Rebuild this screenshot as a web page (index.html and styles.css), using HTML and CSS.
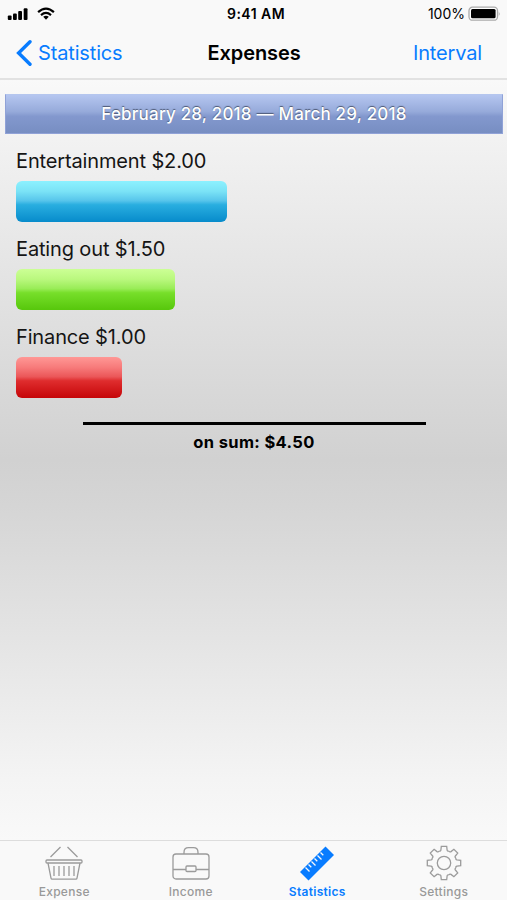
FILE: index.html
```html
<!DOCTYPE html>
<html lang="en">
<head>
<meta charset="utf-8">
<title>Expenses</title>
<link rel="stylesheet" href="styles.css">
</head>
<body>
<header class="header">
  <div class="status">
    <div class="signals">
      <svg width="21" height="14" viewBox="0 0 21 14"><rect x="0.8" y="8.500" width="3.800" height="4.500" rx="1"/><rect x="6" y="6.500" width="3.800" height="6.500" rx="1"/><rect x="11.200" y="4" width="3.800" height="9" rx="1"/><rect x="16.700" y="1.200" width="3.800" height="11.800" rx="1"/></svg>
      <svg class="wifi" width="18" height="14" viewBox="0 0 18 14"><path d="M1.100 5.100Q9-2 16.900 5.100M4 8.100Q9 3.800 14 8.100" fill="none" stroke="#000" stroke-width="2.200"/><path d="M6.200 9.800Q9 7.800 11.800 9.800L9 12.700Z"/></svg>
    </div>
    <span class="time">9:41 AM</span>
    <div class="power">
      <span class="percent">100%</span>
      <svg width="33" height="16" viewBox="0 0 33 16"><rect x="1" y="1.200" width="28.500" height="13" rx="3.500" fill="#fff" stroke="#aaa" stroke-width="1.300"/><rect x="3" y="3.100" width="24.600" height="9.200" rx="1.500"/><path d="M30.800 5.500q1.500 2.200 0 4.400z" fill="#999"/></svg>
    </div>
  </div>
  <nav class="navbar">
    <a class="back"><svg width="16" height="26" viewBox="0 0 16 26"><path d="M14 1.800L2.600 13L14 24.200" fill="none" stroke="#087cff" stroke-width="3.400" stroke-linecap="round"/></svg><span>Statistics</span></a>
    <h1 class="title">Expenses</h1>
    <a class="interval">Interval</a>
  </nav>
</header>
<main class="content">
  <div class="period">February 28, 2018 — March 29, 2018</div>
  <section class="chart">
    <div class="label">Entertainment $2.00</div>
    <div class="bar blue"></div>
    <div class="label">Eating out $1.50</div>
    <div class="bar green"></div>
    <div class="label">Finance $1.00</div>
    <div class="bar red"></div>
  </section>
  <div class="total">on sum: $4.50</div>
</main>
<footer class="tabs">
  <a class="tab"><svg width="38" height="36" viewBox="0 0 38 36"><path d="M15.500 2L5.500 12M22.500 2L32.500 12"/><rect x="1" y="15" width="36" height="3" rx="1"/><path d="M3 18l3 15.200q.2 1 1 1h24q.8 0 1-1L35 18M9 21v10M14 21v10M19 21v10M24 21v10M29 21v10"/></svg><span>Expense</span></a>
  <a class="tab"><svg width="38" height="36" viewBox="0 0 38 36"><rect x="1" y="9" width="36" height="25" rx="3"/><path d="M12 9V7.500Q12 2.700 16.500 2.700h5Q26 2.700 26 7.500V9M1 24.500h13M24 24.500h13"/><rect x="14" y="21" width="10" height="5.500" rx="1"/></svg><span>Income</span></a>
  <a class="tab active"><svg width="38" height="36" viewBox="0 0 38 36"><path class="ruler" d="M27.500 1.500L36 10L10.500 35.500L2 27Z"/><path class="marks" d="M7.500 22.500l4 4M10.500 19.500l2.800 2.800M13.500 16.500l4 4M16.500 13.500l2.800 2.800M19.500 10.500l4 4M22.500 7.500l2.800 2.800"/></svg><span>Statistics</span></a>
  <a class="tab"><svg width="38" height="36" viewBox="-19 -18 38 36"><defs><path id="tooth" d="M-4.970-12Q-3.300-11.500-3.100-13L-2.700-16.700H2.700L3.100-13Q3.300-11.500 4.970-12"/></defs><use href="#tooth"/><use href="#tooth" transform="rotate(45)"/><use href="#tooth" transform="rotate(90)"/><use href="#tooth" transform="rotate(135)"/><use href="#tooth" transform="rotate(180)"/><use href="#tooth" transform="rotate(225)"/><use href="#tooth" transform="rotate(270)"/><use href="#tooth" transform="rotate(315)"/><circle r="6.700"/></svg><span>Settings</span></a>
</footer>
</body>
</html>
```
FILE: styles.css
```css
* { box-sizing: border-box; }
body { margin: 0; width: 507px; height: 900px; display: flex; flex-direction: column; overflow: hidden; background: #f9f9f9; color: #000; font-family: Inter, "Liberation Sans", sans-serif; white-space: nowrap; }
svg { display: block; flex: none; }
.header { height: 80px; border-bottom: 2px solid #e2e2e2; background: #f9f9f9; }
.status { height: 27px; display: grid; grid-template-columns: 1fr 62px 1fr; align-items: center; padding: 0 6px 0 7px; }
.signals, .power { display: flex; align-items: center; }
.wifi { margin-left: 9px; }
.power { justify-content: flex-end; gap: 3px; }
.time { font-size: 14px; font-weight: 600; line-height: 27px; letter-spacing: 0.45px; padding-left: 4px; }
.percent { font-size: 14px; line-height: 27px; }
.navbar { height: 50px; display: grid; grid-template-columns: 1fr auto 1fr; align-items: center; padding: 0 25px 0 16px; }
.back { display: flex; align-items: center; gap: 6px; }
.back, .interval { color: #087cff; font-size: 20px; letter-spacing: -0.15px; padding-top: 1px; }
.interval { text-align: right; }
.title { margin: 1px -9px 0 0; width: 102px; padding-left: 5px; font-size: 20px; font-weight: 600; letter-spacing: -0.1px; }
.content { flex: 1; padding: 14px 4px 0 5px; background: linear-gradient(#f9f9f9 0%, #f1f1f1 9%, #d1d1d1 50%, #d5d5d5 56%, #f4f4f4 92%, #f9f9f9 100%); }
.period { height: 40px; text-align: center; color: #fff; font-size: 17px; font-weight: 500; letter-spacing: 0.2px; background: linear-gradient(#b5c6f0, #96aada 44%, #8398ce 56%, #778ec2); border: 1px solid #90a2d7; border-top-color: #b5c6ee; line-height: 38px; text-shadow: 0 -1px 1px #4c5874; }
.chart { padding: 10px 11px 0; }
.label { height: 34px; line-height: 34px; font-size: 20px; letter-spacing: -0.14px; color: #151515; margin-bottom: 3px; }
.bar { height: 41px; border-radius: 6px; margin-bottom: 10px; }
.blue { width: 211px; background: linear-gradient(#8cf1ff, #7be3f6 25%, #57c5eb 48%, #29aee0 58%, #078bcb); }
.green { width: 159px; background: linear-gradient(#ccff95, #baf87e 25%, #99ec57 48%, #77df2a 58%, #57c70c); }
.red { width: 106px; background: linear-gradient(#ff9895, #f77b7b 25%, #eb5759 48%, #df2d2e 58%, #c50508); }
.total { width: 343px; margin: 24px auto 0; border-top: 3px solid #000; text-align: center; padding-top: 6px; font-size: 16.5px; line-height: 22px; font-weight: 700; letter-spacing: 0.35px; }
.tabs { height: 60px; border-top: 1px solid #ddd; display: grid; grid-template-columns: repeat(4, 1fr); padding-left: 1px; }
.tab { display: flex; flex-direction: column; align-items: center; padding-top: 4px; color: #999; font-size: 12px; font-weight: 500; line-height: 16px; letter-spacing: 0.3px; }
.tab svg { fill: none; stroke: #9b9b9b; stroke-width: 1.3; }
.tab span { margin-top: 3px; }
.tab.active { color: #087cff; font-weight: 600; }
.tab .ruler { fill: #087cff; stroke: none; }
.tab .marks { stroke: #f9f9f9; stroke-width: 1.3; }
```
